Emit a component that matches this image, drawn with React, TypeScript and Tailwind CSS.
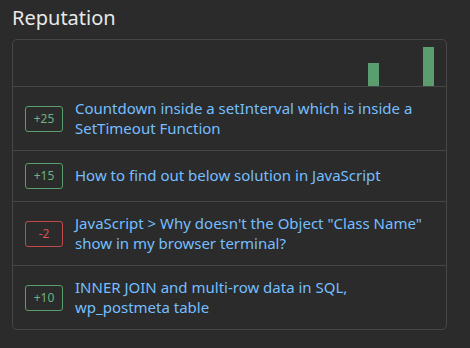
const rows = [
  { delta: 25, title: "Countdown inside a setInterval which is inside a SetTimeout Function" },
  { delta: 15, title: "How to find out below solution in JavaScript" },
  { delta: -2, title: 'JavaScript > Why doesn\'t the Object "Class Name" show in my browser terminal?' },
  { delta: 10, title: "INNER JOIN and multi-row data in SQL, wp_postmeta table" },
];

// pozycja słupka w pikselach od lewej krawędzi wykresu, wysokość w px
const bars = [
  { left: 355, height: 23 },
  { left: 410, height: 39 },
];

export default function App() {
  return (
    <div
      className="h-[348px] w-[470px] bg-[#2b2b2b] px-3 pt-[3px]"
      style={{ fontFamily: '"Noto Sans", "Open Sans", sans-serif' }}
    >
      <h2 className="text-[20px] leading-[30px] text-[#e8e8e8]">Reputation</h2>
      <div className="mt-[6px] w-[435px] rounded-[5px] border border-[#474747]">
        <div className="relative h-[47px] border-b border-[#474747]">
          {bars.map((b) => (
            <div
              key={b.left}
              className="absolute bottom-0 w-[11px] bg-[#5a9e6f]"
              style={{ left: b.left, height: b.height }}
            />
          ))}
        </div>
        {rows.map((r, i) => {
          const up = r.delta > 0;
          return (
            <div
              key={r.title}
              className={
                "flex items-center gap-3 px-3 py-3 " +
                (i < rows.length - 1 ? "border-b border-[#474747]" : "")
              }
            >
              <span
                className={
                  "flex h-[26px] w-[38px] shrink-0 items-center justify-center rounded-[3px] border text-[12px] " +
                  (up ? "border-[#5a9e6f] text-[#6cb47f]" : "border-[#c24a4a] text-[#d9534f]")
                }
              >
                {up ? "+" : ""}
                {r.delta}
              </span>
              <a className="text-[15px] leading-[19.5px] text-[#75bfff]">{r.title}</a>
            </div>
          );
        })}
      </div>
    </div>
  );
}
